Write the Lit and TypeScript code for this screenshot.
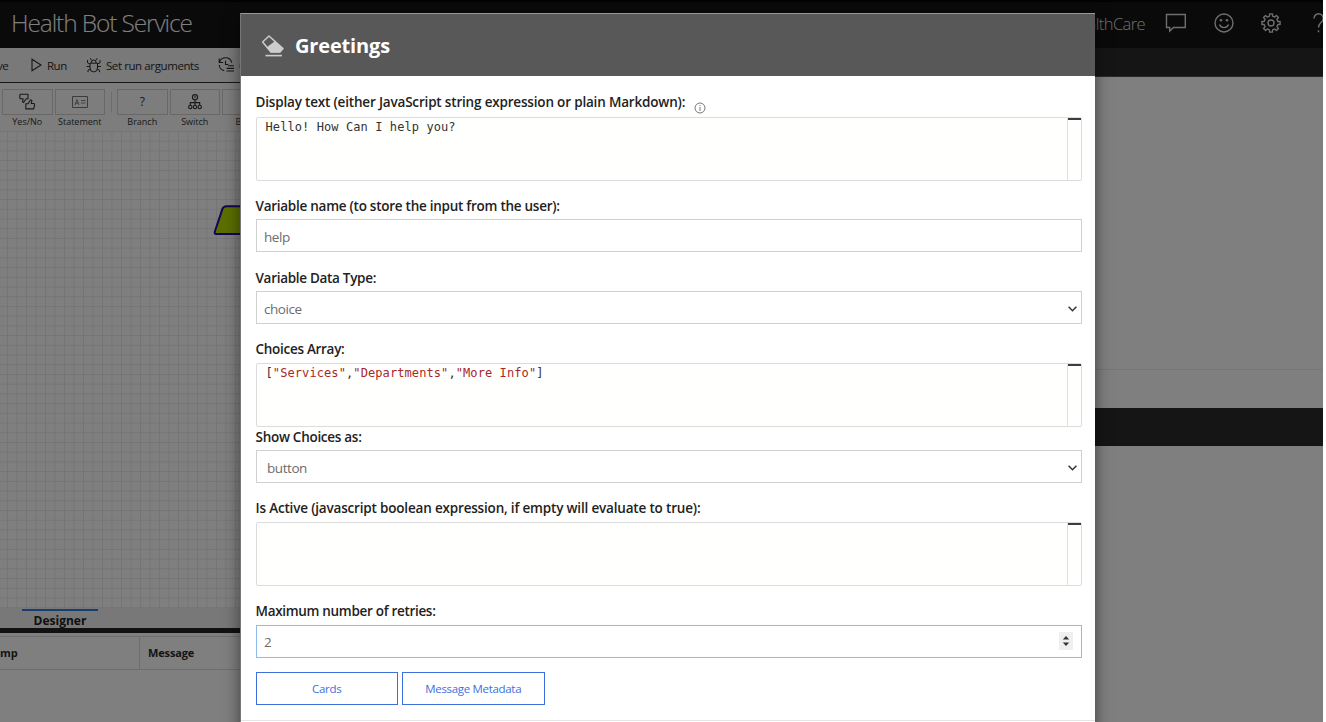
import { LitElement, html, svg, css } from "lit";
import { customElement } from "lit/decorators.js";

const BUG = svg`<g fill="none" stroke="currentColor" stroke-width="1"><path d="M4 6.200h7.500v4.800a3.750 3.900 0 0 1-7.500 0z M5.200 6a2.500 3 0 0 1 5 0 M5.600 3.400 4.200 1.200M9.800 3.400 11.200 1.200M4 7 1.500 5.800V3M11.500 7 14 5.800V3M4 9.500H.6M11.500 9.500h3.400M4.300 12.200 2 13.200v2M11.200 12.200l2.300 1v2"/></g>`;
const HISTORY = svg`<g fill="none" stroke="currentColor" stroke-width="1.1"><path d="M1.2 1.5v4h4M1.5 5.3A6.4 6.4 0 0 1 13.8 5.6M1.2 8a6.4 6.4 0 0 0 5 5.600M7.500 3.800v3.700h2.700M10 8.800h6M8.600 11.400H16M8.600 14H16"/></g>`;
const THUMBS = svg`<g fill="none" stroke="currentColor" stroke-width="1.1" stroke-linejoin="round"><path d="M1.2 1.2H9v4.600H7.200L4.600 9.400 3.500 8.800l.6-3H1.200L.7 3.400z"/><path d="M6.800 10.800h2.300l2.400-4 1.400.7-.7 3h3l.4 2-1 3.400H6.800z"/></g>`;
const CARD = svg`<g fill="none" stroke="currentColor"><path d="M.5.5h15v11H.5z"/><path d="M3 9l2-5.500L7 9M3.700 7.200h2.600M9 4.500h4.500M9 7h4.500" stroke-width=".9"/></g>`;
const TREE = svg`<g fill="none" stroke="currentColor" stroke-width="1.1"><circle cx="7" cy="3.200" r="2.600"/><path d="M7 2v2M7 6v5M2.300 11V8.600h9.400V11"/><circle cx="2.300" cy="13" r="1.700"/><circle cx="7" cy="13" r="1.700"/><circle cx="11.700" cy="13" r="1.700"/></g>`;

const gearPath = () => {
  const pts: string[] = [];
  for (let i = 0; i < 8; i++) {
    for (const [r, d] of [[7, -13], [9.2, -9], [9.2, 9], [7, 13]]) {
      const a = ((i * 45 + d) * Math.PI) / 180;
      pts.push(`${(10 + r * Math.sin(a)).toFixed(2)} ${(10 - r * Math.cos(a)).toFixed(2)}`);
    }
  }
  return `M${pts.join("L")}Z`;
};

@customElement("app-root")
export class AppRoot extends LitElement {
  static styles = css`
    :host { display: block; position: relative; width: 1326px; height: 722px; overflow: hidden; background: #fff;
      font-family: "Open Sans", "Noto Sans", sans-serif; color: #333; }
    * { box-sizing: border-box; }
    svg { display: block; flex: none; }
    .page { width: 1323px; height: 722px; display: flex; flex-direction: column; background: #fff; overflow: hidden; }
    .top { height: 48px; flex: none; background: #141414; border-top: 2px solid #040404; color: #fff; display: flex; align-items: center;
      justify-content: space-between; padding: 0 0 4px 11px; }
    .brand { font-size: 24.5px; font-weight: 300; letter-spacing: -1.13px; line-height: 40px; }
    .right { display: flex; align-items: center; width: 300px; flex: none; }
    .user { width: 122px; flex: none; text-align: right; font-size: 16.5px; font-weight: 300; letter-spacing: -.6px; margin-right: 20px; color: #ddd; }
    .right svg { margin-right: 27px; }
    .right .gear { margin-right: 30.5px; }
    .cols { flex: 1; display: flex; }
    .left { width: 668px; display: flex; flex-direction: column; }
    .tools { height: 35px; flex: none; background: #f2f2f2; border-bottom: 1.5px solid #303030; display: flex; align-items: center; font-size: 11.5px;
      letter-spacing: -.4px; color: #2c2c2c; white-space: nowrap; }
    .tools span { margin-right: 19px; }
    .tools .cut { margin: 0 21.5px 0 -3px; }
    .tools svg { margin-right: 4px; }
    .palette { height: 48px; flex: none; background: #fbfbfb; display: flex; padding: 6px 0 0 2px; gap: 2px; font-size: 9px; }
    .node { width: 50.5px; display: flex; flex-direction: column; align-items: center; line-height: 12px; }
    .box { width: 50.5px; height: 25.5px; border: 1px solid #d0d0d0; display: flex; align-items: center; justify-content: center; margin-bottom: 1px; font-size: 12px; }
    .sep { width: 1px; height: 20px; margin: 3px 3px 0 4px; background: #d8d8d8; }
    .grid { height: 477px; flex: none; background-color: #fff; padding: 74px 0 0 213px;
      background-image: linear-gradient(90deg, #eaeaea 1px, transparent 1px), linear-gradient(#eaeaea 1px, transparent 1px);
      background-size: 9.5px 9.5px, 9.72px 9.72px; background-position: 7px 0, 0 0; }
    .tabs { height: 20px; flex: none; background: #f0f0f0; padding-left: 22px; }
    .tab { width: 76px; height: 20px; border-top: 2px solid #2f7fd6; margin-top: 1px; text-align: center; font-weight: 700; font-size: 12px; line-height: 20px; color: #222; }
    .bar { height: 5px; flex: none; background: #222; }
    .table { margin-top: 3px; height: 34px; flex: none; border: solid #ddd; border-width: 1px 0; display: flex; font-size: 11px; font-weight: 700;
      line-height: 31px; letter-spacing: -.15px; color: #2a2a2a; }
    .c1 { width: 140px; border-right: 1px solid #ddd; }
    .c2 { padding-left: 8px; }
    .side { flex: 1; display: flex; flex-direction: column; }
    .s1 { height: 29px; background: #2b2b2b; border-bottom: 1px solid #555; }
    .s2 { height: 292px; }
    .s3 { height: 39px; border-top: 1px solid #ececec; }
    .s4 { height: 38px; background: #2a2a2a; }
    .shade { position: absolute; left: 0; top: 0; width: 1323px; height: 722px; background: rgba(0,0,0,.5); overflow: hidden; }
    .modal { position: absolute; left: 240px; top: 13px; width: 855px; height: 760px; background: #fff; border-left: 1px solid #777;
      box-shadow: 0 5px 15px rgba(0,0,0,.5); }
    .head { height: 63px; background: #585858; border-top: 1px solid #999; display: flex; align-items: center; padding: 1px 0 0 19px; gap: 11px;
      color: #fff; font-size: 20px; font-weight: 700; letter-spacing: -.16px; }
    .form { padding: 0 13.5px 0 14.5px; display: flex; flex-direction: column; }
    .label { height: 20px; line-height: 20px; font-size: 13.5px; font-weight: 600; color: #222; display: flex; gap: 9px; white-space: nowrap; margin-bottom: 3.5px; }
    .label svg { margin-top: 10px; }
    .field { border: 1px solid #d0d0d0; height: 33px; display: flex; align-items: center; justify-content: space-between; padding: 2px 4px 0 7.5px;
      font-size: 13.5px; letter-spacing: -.45px; color: #6c6c6c; }
    .area { height: 64px; border: 1px solid #dcdcdc; border-radius: 2px; background: #fffffd; display: flex; justify-content: space-between;
      font: 12px/18px "DejaVu Sans Mono", monospace; padding-left: 9px; letter-spacing: .09px; color: #333; white-space: pre; }
    .area i { width: 14px; border-left: 1px solid #e0e0e0; display: block; }
    .area b { display: block; height: 2px; background: #3c3c44; }
    .str { color: #a82828; }
    .focus { border-color: #8fbdea; padding: 1px 8px 0 7.5px; }
    .spin { background: #efefef; width: 14px; height: 18px; display: flex; align-items: center; justify-content: center; margin-bottom: 2px; }
    .btns { display: flex; gap: 4px; margin-top: 14px; }
    .btn { width: 142.5px; height: 33.5px; border: 1px solid #3e6fe0; color: #3e6fe0; font-size: 11.5px; letter-spacing: -.32px; display: flex;
      align-items: center; justify-content: center; padding-top: 1px; }
    .foot { margin-top: 14.5px; border-top: 1px solid #e5e5e5; }
    .first { margin: 16.1px 0 4.6px; } .gap { margin-top: 15.2px; }
  `;

  private label(text: string, spacing: number, cls = "", info = false) {
    return html`<div class="label ${cls}"><span style="letter-spacing:${spacing}px">${text}</span>${info
      ? html`<svg width="12" height="12" viewBox="0 0 12 12" fill="none" stroke="#666" stroke-width=".9"><circle cx="6" cy="6" r="5"/><path d="M6 5v4M6 3v1"/></svg>` : ""}</div>`;
  }
  private area(content: unknown) {
    return html`<div class="area"><span>${content}</span><i><b></b></i></div>`;
  }
  private select(value: string, pad = "") {
    return html`<div class="field"><span>${pad}${value}</span><svg width="9" height="6" viewBox="0 0 9 6" fill="none" stroke="#333" stroke-width="1.5"><path d="M.6.8 4.500 4.700 8.400.8"/></svg></div>`;
  }
  private node(label: string, icon: unknown) {
    return html`<div class="node"><div class="box">${icon}</div>${label}</div>`;
  }

  render() {
    return html`
      <div class="page">
        <div class="top">
          <div class="brand">Health Bot Service</div>
          <div class="right">
            <div class="user">HealthCare</div>
            <svg width="22" height="20" viewBox="0 0 22 20" fill="none" stroke="#ddd" stroke-width="1.400"><path d="M1.500 1.500h18.800v13H8.500l-3.800 3.600v-3.600H1.500z"/></svg>
            <svg width="20" height="20" viewBox="0 0 20 20" fill="none" stroke="#ddd" stroke-width="1.400"><circle cx="10" cy="10" r="9"/><path d="M5.500 11.500a4.800 4.800 0 0 0 9 0"/><g fill="#ddd" stroke="none"><circle cx="7" cy="7.300" r="1.300"/><circle cx="13" cy="7.300" r="1.300"/></g></svg>
            <svg class="gear" width="20" height="20" viewBox="0 0 20 20" fill="none" stroke="#ddd" stroke-width="1.400" stroke-linejoin="round"><path d=${gearPath()}/><circle cx="10" cy="10" r="3"/></svg>
            <svg width="13" height="22" viewBox="0 0 13 22" fill="none" stroke="#ddd" stroke-width="1.400"><path d="M2 6.500a4.600 4.600 0 1 1 7.800 3.200C8 11.500 6.500 12.300 6.500 15.500M6.500 18.300v2"/></svg>
          </div>
        </div>
        <div class="cols">
          <div class="left">
            <div class="tools">
              <span class="cut">ve</span>
              <svg width="13" height="14" viewBox="0 0 13 14" fill="none" stroke="currentColor" stroke-width="1.100"><path d="M2 1.200 11 7 2 12.800z"/></svg><span>Run</span>
              <svg width="16" height="16" viewBox="0 0 16 16">${BUG}</svg><span>Set run arguments</span>
              <svg width="17" height="16" viewBox="0 0 17 16">${HISTORY}</svg><span>Conversation history</span>
            </div>
            <div class="palette">
              ${this.node("Yes/No", html`<svg width="17" height="17" viewBox="0 0 17 17">${THUMBS}</svg>`)}
              ${this.node("Statement", html`<svg width="16" height="12" viewBox="0 0 16 12" color="#777">${CARD}</svg>`)}
              <div class="sep"></div>
              ${this.node("Branch", "?")}
              ${this.node("Switch", html`<svg width="14" height="16" viewBox="0 0 14 16">${TREE}</svg>`)}
              ${this.node("Begin", "")}
            </div>
            <div class="grid">
              <svg width="80" height="31" viewBox="0 0 80 31"><path d="M9.500 3.600Q10.800 1.200 13.500 1.200H80V29H3Q1.200 29 1.900 26.500z" fill="#b6de00" stroke="#2a08a8" stroke-width="2"/></svg>
            </div>
            <div class="tabs"><div class="tab">Designer</div></div>
            <div class="bar"></div>
            <div class="table"><div class="c1">mp</div><div class="c2">Message</div></div>
          </div>
          <div class="side"><div class="s1"></div><div class="s2"></div><div class="s3"></div><div class="s4"></div></div>
        </div>
      </div>
      <div class="shade">
        <div class="modal">
          <div class="head">
            <svg width="24" height="24" viewBox="0 0 24 24" stroke-linejoin="round"><path d="M9 2 2.600 8 11 18h9l3-3.400z" fill="none" stroke="#ccc" stroke-width="1.500"/><path d="M14.800 7.200 23.300 14.700 20 18.500h-9.300L6.500 13.600z" fill="#ccc"/><path d="M5.500 21.600h16.500" stroke="#ccc" stroke-width="1.600"/></svg>
            <span>Greetings</span>
          </div>
          <div class="form">
            ${this.label("Display text (either JavaScript string expression or plain Markdown):", -0.18, "first", true)}
            ${this.area("Hello! How Can I help you?")}
            ${this.label("Variable name (to store the input from the user):", -0.26, "gap")}
            <div class="field"><span>help</span></div>
            ${this.label("Variable Data Type:", -0.3, "gap")}
            ${this.select("choice")}
            ${this.label("Choices Array:", -0.29, "gap")}
            ${this.area(html`[<span class="str">"Services"</span>,<span class="str">"Departments"</span>,<span class="str">"More Info"</span>]`)}
            ${this.label("Show Choices as:", -0.28)}
            ${this.select("button", "\u00a0")}
            ${this.label("Is Active (javascript boolean expression, if empty will evaluate to true):", -0.18, "gap")}
            ${this.area("")}
            ${this.label("Maximum number of retries:", -0.31, "gap")}
            <div class="field focus"><span>2</span><div class="spin"><svg width="8" height="12" viewBox="0 0 8 12" fill="#333"><path d="M.8 4.500 4 1l3.200 3.500zM.8 7.500 4 11l3.200-3.500z"/></svg></div></div>
            <div class="btns"><div class="btn">Cards</div><div class="btn">Message Metadata</div></div>
          </div>
          <div class="foot"></div>
        </div>
      </div>`;
  }
}
